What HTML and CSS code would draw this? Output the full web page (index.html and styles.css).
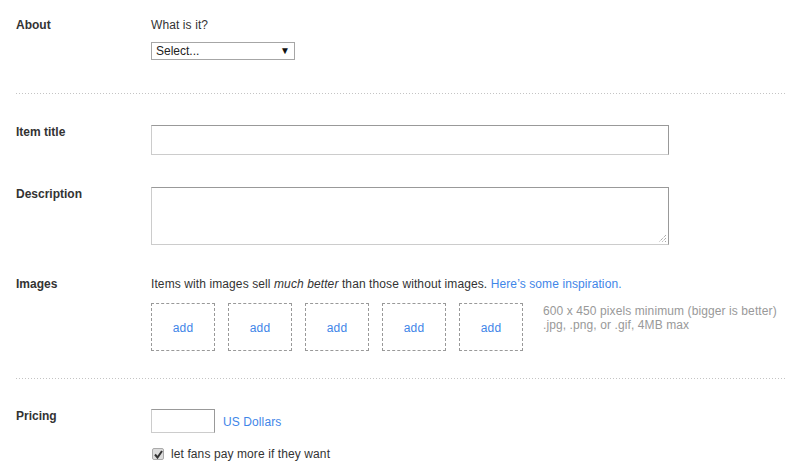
FILE: index.html
```html
<!DOCTYPE html>
<html>
<head>
<meta charset="utf-8">
<link rel="stylesheet" href="styles.css">
</head>
<body>
<form class="form">
  <div class="row row-about">
    <div class="label">About</div>
    <div class="field">
      <div class="hint">What is it?</div>
      <div class="select-wrap">
        <select class="select"><option>Select...</option></select>
        <span class="arrow">&#9660;</span>
      </div>
    </div>
  </div>
  <div class="sep"></div>
  <div class="row row-title">
    <div class="label">Item title</div>
    <div class="field"><input class="text-input title-input" type="text"></div>
  </div>
  <div class="row row-desc">
    <div class="label">Description</div>
    <div class="field">
      <div class="ta-wrap">
        <textarea class="textarea"></textarea>
        <svg class="grip" width="9" height="9" viewBox="0 0 9 9"><path d="M8 1 L1 8 M8 4 L4 8 M8 7 L7 8" stroke="#888" stroke-width="1" stroke-dasharray="1 1" fill="none"/></svg>
      </div>
    </div>
  </div>
  <div class="row row-images">
    <div class="label">Images</div>
    <div class="field">
      <div class="intro">Items with images sell <em>much better</em> than those without images. <a class="link" href="#">Here’s some inspiration.</a></div>
      <div class="images">
        <a class="add-box" href="#">add</a>
        <a class="add-box" href="#">add</a>
        <a class="add-box" href="#">add</a>
        <a class="add-box" href="#">add</a>
        <a class="add-box" href="#">add</a>
        <div class="img-info">600 x 450 pixels minimum (bigger is better)<br>.jpg, .png, or .gif, 4MB max</div>
      </div>
    </div>
  </div>
  <div class="sep sep2"></div>
  <div class="row row-pricing">
    <div class="label">Pricing</div>
    <div class="field">
      <div class="price-line">
        <input class="text-input price-input" type="text">
        <a class="link currency" href="#">US Dollars</a>
      </div>
      <label class="check-line">
        <span class="checkbox"><svg width="9" height="9" viewBox="0 0 9 9"><path d="M1 4.5 L3.5 7.5 L8 1" stroke="#333" stroke-width="2" fill="none"/></svg></span>
        <span>let fans pay more if they want</span>
      </label>
    </div>
  </div>
</form>
</body>
</html>
```

FILE: styles.css
```css
html, body {
  margin: 0;
  padding: 0;
  background: #fff;
}
body {
  font-family: "Liberation Sans", Arial, sans-serif;
  font-size: 12px;
  line-height: 14px;
  color: #333;
}
.form {
  padding-top: 18px;
}
.row {
  display: grid;
  grid-template-columns: 135px 1fr;
  padding-left: 16px;
}
.label {
  font-weight: bold;
  color: #333;
}
.field {
  letter-spacing: 0.1px;
}
.hint {
  color: #333;
}
.select-wrap {
  position: relative;
  width: 144px;
  margin-top: 10px;
}
.select {
  appearance: none;
  -webkit-appearance: none;
  display: block;
  width: 144px;
  height: 18px;
  margin: 0;
  padding: 0 4px;
  border: 1px solid #a6a6a6;
  border-radius: 0;
  background: #fff;
  font-family: "Liberation Sans", Arial, sans-serif;
  font-size: 12px;
  color: #222;
}
.arrow {
  position: absolute;
  right: 5px;
  top: 2px;
  font-size: 10px;
  line-height: 14px;
  color: #111;
  pointer-events: none;
}
.sep {
  margin-left: 16px;
  height: 1px;
  background-image: linear-gradient(to right, #c4c4c4 1px, transparent 1px);
  background-size: 3px 1px;
  margin-top: 33px;
}
.row-title {
  margin-top: 31px;
}
.text-input {
  display: block;
  margin: 0;
  padding: 0 4px;
  box-sizing: border-box;
  border: 1px solid;
  border-color: #999 #999 #ccc #ccc;
  border-radius: 0;
  background: #fff;
  font-family: "Liberation Sans", Arial, sans-serif;
  font-size: 12px;
}
.title-input {
  width: 518px;
  height: 30px;
}
.row-desc {
  margin-top: 32px;
}
.ta-wrap {
  position: relative;
  width: 518px;
  height: 58px;
}
.textarea {
  display: block;
  box-sizing: border-box;
  width: 518px;
  height: 58px;
  margin: 0;
  padding: 4px;
  border: 1px solid;
  border-color: #999 #999 #ccc #ccc;
  border-radius: 0;
  resize: none;
  font-family: "Liberation Sans", Arial, sans-serif;
  font-size: 12px;
}
.grip {
  position: absolute;
  right: 2px;
  bottom: 2px;
}
.row-images {
  margin-top: 31px;
}
.row-images .label {
  padding-top: 1px;
}
.intro {
  padding-top: 1px;
  color: #333;
}
.intro em {
  font-style: italic;
}
.link {
  color: #3f86e8;
  text-decoration: none;
}
.images {
  display: flex;
  gap: 13px;
  margin-top: 12px;
  align-items: flex-start;
}
.add-box {
  box-sizing: border-box;
  width: 64px;
  height: 48px;
  border: 1px dashed #999;
  display: flex;
  align-items: center;
  justify-content: center;
  color: #3f86e8;
  text-decoration: none;
  padding-top: 1px;
}
.img-info {
  margin-left: 7px;
  color: #999;
  line-height: 14px;
  margin-top: 1px;
  white-space: nowrap;
}
.sep2 {
  margin-top: 27px;
}
.row-pricing {
  margin-top: 30px;
}
.price-line {
  display: flex;
  align-items: center;
  gap: 8px;
}
.price-input {
  width: 64px;
  height: 24px;
}
.currency {
  padding-top: 1px;
}
.check-line {
  display: flex;
  align-items: center;
  gap: 7px;
  margin-top: 14px;
  margin-left: 1px;
  color: #333;
}
.checkbox {
  box-sizing: border-box;
  width: 12px;
  height: 12px;
  border: 1px solid #aaa;
  border-radius: 2px;
  background: #dcdcdc;
  display: flex;
  align-items: center;
  justify-content: center;
}
```
